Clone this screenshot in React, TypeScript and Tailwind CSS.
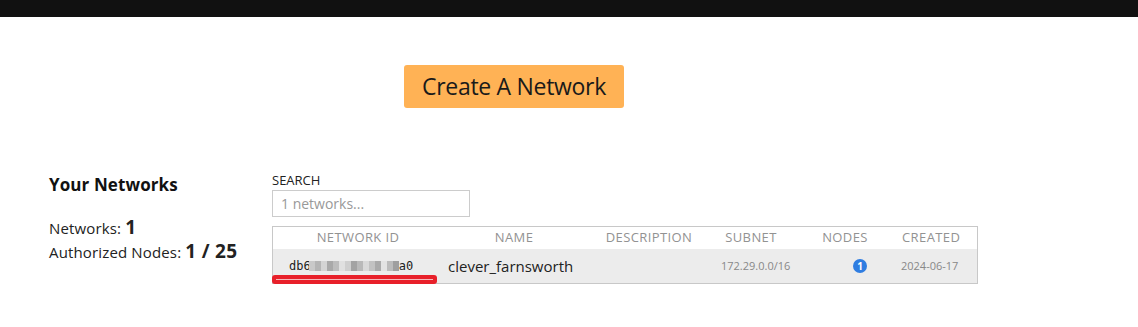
import React from 'react';

const font = { fontFamily: '"Open Sans", "Noto Sans", sans-serif' };

const cols = [
  { label: 'NETWORK ID', w: 'w-[170px]', align: 'text-center' },
  { label: 'NAME', w: 'w-[142px]', align: 'text-center' },
  { label: 'DESCRIPTION', w: 'w-[128px]', align: 'text-center' },
  { label: 'SUBNET', w: 'w-[76px]', align: 'text-center' },
  { label: 'NODES', w: 'w-[112px]', align: 'text-center' },
  { label: 'CREATED', w: 'w-[76px]', align: 'text-left pl-[1px]' },
];

const blur = ['#c9c9c9', '#b5b5b5', '#d4d4d4', '#a9a9a9', '#bdbdbd', '#e0e0e0', '#cfcfcf', '#a3a3a3', '#b9b9b9', '#d9d9d9', '#c2c2c2', '#aaaaaa', '#e3e3e3', '#bcbcbc', '#9f9f9f'];

const App: React.FC = () => {
  return (
    <div className="w-[1138px] h-[327px] bg-white text-[#111] overflow-hidden" style={font}>
      <div className="h-[17px] bg-[#111111]" />

      <div className="pt-[48px] pl-[404px]">
        <button className="w-[220px] h-[43px] bg-[#ffb255] rounded-[3px] text-[23px] text-[#1a1a1a] tracking-[-0.3px]">
          Create A Network
        </button>
      </div>

      <div className="flex pt-[65px]">
        <div className="w-[272px] pl-[49px]">
          <h2 className="text-[17px] font-bold leading-[24px] tracking-[0.1px]">Your Networks</h2>
          <div className="mt-[19px] text-[15px] leading-[23px] text-[#222] tracking-[0.15px]">
            Networks: <span className="text-[19px] font-bold">1</span>
          </div>
          <div className="text-[15px] leading-[23px] text-[#222] tracking-[0.15px]">
            Authorized Nodes: <span className="text-[19px] font-bold tracking-[0.3px]">1 / 25</span>
          </div>
        </div>

        <div className="flex flex-col">
          <label className="text-[13px] leading-[14px] text-[#222]">SEARCH</label>
          <div className="mt-[3px] w-[198px] h-[27px] border border-[#cccccc] flex items-center pl-[8px] text-[14px] text-[#999]">
            1 networks...
          </div>

          <div className="relative mt-[9px] w-[706px] border border-[#c8c8c8]">
            <div className="flex h-[22px] items-center bg-white">
              {cols.map((c) => (
                <div key={c.label} className={`${c.w} ${c.align} text-[13px] tracking-[0.4px] text-[#929292] shrink-0 whitespace-nowrap`}>
                  {c.label}
                </div>
              ))}
            </div>
            <div className="flex h-[34px] items-center bg-[#ececec]">
              <div className="w-[170px] shrink-0 pl-[16px] flex items-center text-[12px] text-[#222]" style={{ fontFamily: '"DejaVu Sans Mono", monospace' }}>
                <span>db6</span>
                <span className="flex h-[10px] ml-[-2px]">
                  {blur.map((b, i) => (
                    <span key={i} className="w-[6px] h-full" style={{ backgroundColor: b }} />
                  ))}
                </span>
                <span>a0</span>
              </div>
              <div className="w-[142px] shrink-0 pl-[5px] text-[15px] text-[#222]">clever_farnsworth</div>
              <div className="w-[128px] shrink-0" />
              <div className="w-[76px] shrink-0 text-center text-[11px] text-[#888] pl-[8px] whitespace-nowrap">172.29.0.0/16</div>
              <div className="w-[112px] shrink-0 flex justify-end pr-[34px]">
                <span className="w-[14px] h-[14px] rounded-full bg-[#2f7de1] text-white text-[10px] font-bold flex items-center justify-center leading-none">1</span>
              </div>
              <div className="w-[76px] shrink-0 text-[11px] text-[#888] whitespace-nowrap">2024-06-17</div>
            </div>

            <div className="absolute left-[-1px] top-[48px] w-[165px] h-[9px] bg-[#e8202a] rounded-[3px] flex items-center px-[4px]">
              <div className="h-[1px] w-full bg-[#f6b7ba]" />
            </div>
          </div>
        </div>
      </div>
    </div>
  );
};

export default App;
